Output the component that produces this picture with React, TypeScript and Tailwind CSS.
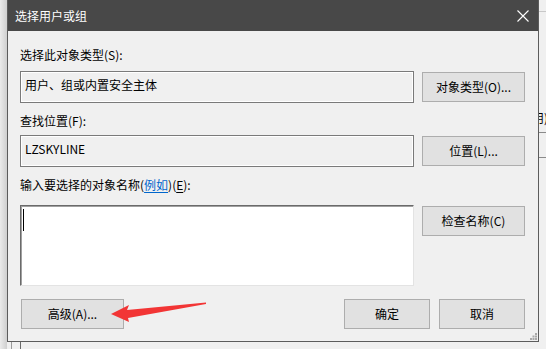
import type { ReactNode } from "react";

type BtnProps = {
  children: ReactNode;
  className?: string;
};

function Btn({ children, className = "" }: BtnProps) {
  return (
    <div
      className={`h-[30px] shrink-0 flex items-center justify-center bg-[#e1e1e1] border border-[#adadad] text-[12px] text-black ${className}`}
    >
      {children}
    </div>
  );
}

function ReadOnlyField({ value }: { value: string }) {
  return (
    <div className="w-[394px] h-[32px] border border-[#7a7a7a] bg-[#f0f0f0] shadow-[inset_0_0_0_1px_#ffffff] px-[4px] pt-[5px] text-[12px] leading-[16px]">
      {value}
    </div>
  );
}

export default function App() {
  return (
    <div className="relative w-[546px] h-[349px] overflow-hidden bg-[#f0f0f0] flex font-['Noto_Sans_CJK_SC',sans-serif] text-[12px] leading-[16px] text-black">
      {/* window behind, left side */}
      <div className="w-[7px] h-full flex flex-col">
        <div className="flex-1 bg-gradient-to-r from-[#ebebeb] to-[#cfcfcf]" />
      </div>

      <div className="w-[532px] h-full shrink-0 flex flex-col">
        <div className="h-[342px] shrink-0 flex flex-col border-x border-b border-[#5c5c5c] bg-[#f0f0f0]">
          {/* title bar */}
          <div className="h-[31px] shrink-0 bg-[#484848] flex items-center justify-between pl-[7px] pr-[9px] text-white">
            <span className="text-[12px] leading-[16px]">选择用户或组</span>
            <svg width="12" height="12" viewBox="0 0 12 12" fill="none" stroke="#ffffff" strokeWidth="1.1">
              <path d="M0.5 0.5L11.5 11.5M11.5 0.5L0.5 11.5" />
            </svg>
          </div>

          <div className="flex flex-col pl-[12px] pr-[13px] pt-[16px]">
            <div className="h-[16px]">选择此对象类型(S):</div>
            <div className="mt-[8px] flex items-center gap-[8px]">
              <ReadOnlyField value="用户、组或内置安全主体" />
              <Btn className="w-[103px]">对象类型(O)...</Btn>
            </div>

            <div className="mt-[10px] h-[16px]">查找位置(F):</div>
            <div className="mt-[6px] flex items-center gap-[8px]">
              <ReadOnlyField value="LZSKYLINE" />
              <Btn className="w-[103px]">位置(L)...</Btn>
            </div>

            <div className="mt-[10px] h-[16px]">
              输入要选择的对象名称(<span className="text-[#0066cc] underline underline-offset-2">例如</span>)(
              <span className="underline underline-offset-2">E</span>):
            </div>
            <div className="mt-[12px] flex items-start gap-[8px]">
              <div className="w-[394px] h-[81px] bg-white border border-t-[#6a6a6a] border-l-[#6a6a6a] border-r-[#e3e3e3] border-b-[#e3e3e3] shadow-[inset_1px_1px_0_0_#a0a0a0] pl-[2px] pt-[3px]">
                <div className="w-px h-[22px] bg-black" />
              </div>
              <Btn className="w-[103px] mt-[1px]">检查名称(C)</Btn>
            </div>

            <div className="mt-[13px] flex items-center">
              <Btn className="w-[103px] ml-[1px]">高级(A)...</Btn>
              <div className="flex-1" />
              <div className="flex gap-[9px]">
                <Btn className="w-[86px]">确定</Btn>
                <Btn className="w-[86px]">取消</Btn>
              </div>
            </div>
          </div>

          <div className="flex-1 flex items-end justify-end pr-[1px] pb-[1px]">
            <svg width="7" height="7" viewBox="0 0 7 7" fill="#a8a8a8">
              <rect x="5" y="0" width="2" height="2" />
              <rect x="2.5" y="2.5" width="2" height="2" />
              <rect x="5" y="2.5" width="2" height="2" />
              <rect x="0" y="5" width="2" height="2" />
              <rect x="2.5" y="5" width="2" height="2" />
              <rect x="5" y="5" width="2" height="2" />
            </svg>
          </div>
        </div>

        {/* window behind, below */}
        <div className="flex-1 flex pl-[4px]">
          <div className="w-px h-full bg-[#9a9a9a]" />
          <div className="w-px h-full bg-[#6a6a6a] ml-[8px]" />
        </div>
      </div>

      {/* window behind, right side */}
      <div className="w-[7px] h-full flex flex-col overflow-hidden">
        <div className="mt-[11px] h-px bg-[#c8c8c8]" />
        <div className="mt-[98px] h-[16px] -ml-[7px] whitespace-nowrap">用)</div>
        <div className="mt-[6px] h-px bg-[#8a8a8a]" />
        <div className="mt-[24px] h-px bg-[#8a8a8a]" />
      </div>

      {/* red annotation arrow */}
      <svg
        className="absolute left-0 top-0 pointer-events-none"
        width="546"
        height="349"
        viewBox="0 0 546 349"
      >
        <polygon
          points="111,314 129,305 127,310 206,302.5 206,304 128,318 129,322"
          fill="#f23535"
        />
      </svg>
    </div>
  );
}
